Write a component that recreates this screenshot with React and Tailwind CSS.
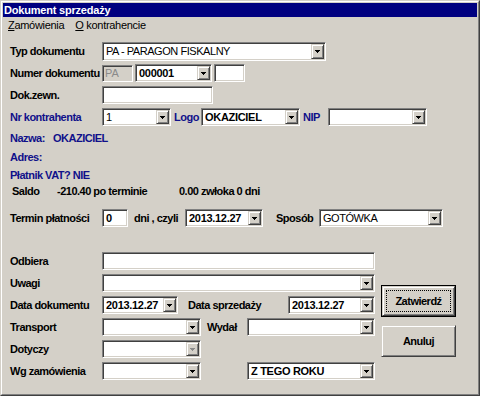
const sunken =
  "border border-t-[#808080] border-l-[#808080] border-r-white border-b-white shadow-[inset_1px_1px_0_#404040,inset_-1px_-1px_0_#d4d0c8]";
const raised =
  "border border-t-[#d4d0c8] border-l-[#d4d0c8] border-r-[#404040] border-b-[#404040] shadow-[inset_1px_1px_0_#ffffff,inset_-1px_-1px_0_#808080]";

const Arrow = ({ disabled }) => (
  <svg width="5" height="3" viewBox="0 0 5 3" shapeRendering="crispEdges">
    <path d="M0 0h5v1H0zM1 1h3v1H1zM2 2h1v1H2z" fill={disabled ? "#8a8a8a" : "#000"} />
  </svg>
);

const Label = ({ children, blue, className = "w-[92px]" }) => (
  <span
    className={`${className} shrink-0 font-bold text-[11px] leading-none tracking-[-0.5px] ${
      blue ? "text-[#10108a]" : "text-black"
    }`}
  >
    {children}
  </span>
);

const Combo = ({ className, value, bold, disabled }) => (
  <div className={`${className} flex shrink-0 bg-white p-[1px] ${sunken}`}>
    <span
      className={`flex-1 flex items-center pl-[2px] text-[11px] leading-none whitespace-nowrap overflow-hidden ${
        bold ? "font-bold tracking-[-0.3px]" : "tracking-[-0.45px]"
      }`}
    >
      {value}
    </span>
    <div className={`w-[13px] h-full flex items-center justify-center bg-[#d4d0c8] ${raised}`}>
      <Arrow disabled={disabled} />
    </div>
  </div>
);

const TextBox = ({ className, value, bold }) => (
  <div
    className={`${className} flex items-center shrink-0 bg-white pl-[3px] text-[11px] leading-none ${sunken} ${
      bold ? "font-bold" : ""
    }`}
  >
    {value}
  </div>
);

export default function App() {
  return (
    <div className="w-[480px] h-[396px] bg-[#d4d0c8] font-['Liberation_Sans',Arial,sans-serif] text-black border border-t-[#d4d0c8] border-l-[#d4d0c8] border-r-[#404040] border-b-[#404040]">
      <div className="h-full border border-t-white border-l-white border-r-[#808080] border-b-[#808080] p-[1px]">
        {/* title */}
        <div className="h-[14px] bg-[#000080] flex items-center pl-[1px]">
          <span className="text-white font-bold text-[11px] leading-none tracking-[-0.2px]">
            Dokument sprzedaży
          </span>
        </div>

        {/* menu */}
        <div className="h-[17px] flex items-center pl-[5px] text-[11px] leading-none tracking-[-0.3px]">
          <span>
            <span className="underline">Z</span>amówienia
          </span>
          <span className="ml-[11px]">
            <span className="underline">O</span> kontrahencie
          </span>
        </div>

        <div className="pl-[7px] pt-[8px]">
          <div className="flex items-center h-[19px]">
            <Label>Typ dokumentu</Label>
            <Combo className="w-[224px] h-[19px]" value="PA - PARAGON FISKALNY" />
          </div>

          <div className="flex items-center h-[18px] mt-[3px]">
            <Label>Numer dokumentu</Label>
            <div className={`w-[31px] h-[17px] flex items-center pl-[2px] text-[11px] leading-none text-[#8a8a8a] bg-[#d4d0c8] ${sunken}`}>
              PA
            </div>
            <Combo className="w-[77px] h-[18px] ml-[2px]" value="000001" bold />
            <TextBox className="w-[31px] h-[18px] ml-[2px]" value="" />
          </div>

          <div className="flex items-center h-[18px] mt-[4px]">
            <Label>Dok.zewn.</Label>
            <TextBox className="w-[111px] h-[18px]" value="" />
          </div>

          <div className="flex items-center h-[18px] mt-[4px]">
            <Label blue>Nr kontrahenta</Label>
            <Combo className="w-[69px] h-[18px]" value="1" />
            <Label blue className="w-[27px] ml-[3px]">Logo</Label>
            <Combo className="w-[99px] h-[18px]" value="OKAZICIEL" bold />
            <Label blue className="w-[25px] ml-[3px]">NIP</Label>
            <Combo className="w-[99px] h-[18px]" value="" />
          </div>

          <div className="flex items-center h-[14px] mt-[5px]">
            <Label blue className="w-[43px]">Nazwa:</Label>
            <Label blue className="w-auto">OKAZICIEL</Label>
          </div>
          <div className="flex items-center h-[14px] mt-[5px]">
            <Label blue className="w-auto">Adres:</Label>
          </div>
          <div className="flex items-center h-[14px] mt-[4px]">
            <Label blue className="w-auto">Płatnik VAT? NIE</Label>
          </div>
          <div className="flex items-center h-[14px] mt-[2px] pl-[2px]">
            <Label className="w-[45px]">Saldo</Label>
            <Label className="w-[122px]">-210.40 po terminie</Label>
            <Label className="w-auto">0.00 zwłoka 0 dni</Label>
          </div>

          <div className="flex items-center h-[18px] mt-[11px]">
            <Label>Termin płatności</Label>
            <TextBox className="w-[26px] h-[18px]" value="0" bold />
            <Label className="w-[51px] ml-[6px]">dni , czyli</Label>
            <Combo className="w-[78px] h-[18px]" value="2013.12.27" bold />
            <Label className="w-[43px] ml-[13px]">Sposób</Label>
            <Combo className="w-[124px] h-[18px]" value="GOTÓWKA" />
          </div>

          <div className="flex mt-[25px]">
            <div className="flex flex-col gap-[4px]">
              <div className="flex items-center h-[18px]">
                <Label>Odbiera</Label>
                <TextBox className="w-[273px] h-[18px]" value="" />
              </div>
              <div className="flex items-center h-[18px]">
                <Label>Uwagi</Label>
                <Combo className="w-[273px] h-[18px]" value="" />
              </div>
              <div className="flex items-center h-[18px]">
                <Label>Data dokumentu</Label>
                <Combo className="w-[76px] h-[18px]" value="2013.12.27" bold />
                <Label className="w-[100px] ml-[10px]">Data sprzedaży</Label>
                <Combo className="w-[87px] h-[18px]" value="2013.12.27" bold />
              </div>
              <div className="flex items-center h-[18px]">
                <Label>Transport</Label>
                <Combo className="w-[99px] h-[18px]" value="" />
                <Label className="w-[40px] ml-[6px]">Wydał</Label>
                <Combo className="w-[128px] h-[18px]" value="" />
              </div>
              <div className="flex items-center h-[18px]">
                <Label>Dotyczy</Label>
                <Combo className="w-[99px] h-[18px]" value="" disabled />
              </div>
              <div className="flex items-center h-[18px]">
                <Label>Wg zamówienia</Label>
                <Combo className="w-[99px] h-[18px]" value="" />
                <Combo className="w-[128px] h-[18px] ml-[46px]" value="Z TEGO ROKU" bold />
              </div>
            </div>

            <div className="flex flex-col ml-[6px] mt-[33px] gap-[8px]">
              <div className="w-[75px] h-[32px] border border-black">
                <div className={`h-full flex p-[3px] bg-[#d4d0c8] ${raised}`}>
                  <div className="flex-1 flex items-center justify-center border border-dotted border-black">
                    <Label className="w-auto">Zatwierdź</Label>
                  </div>
                </div>
              </div>
              <div className={`w-[75px] h-[32px] flex items-center justify-center bg-[#d4d0c8] ${raised}`}>
                <Label className="w-auto">Anuluj</Label>
              </div>
            </div>
          </div>
        </div>
      </div>
    </div>
  );
}
